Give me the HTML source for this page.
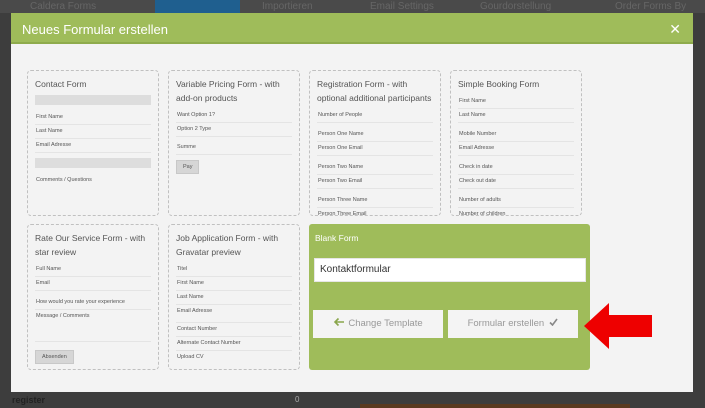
<!DOCTYPE html>
<html><head><meta charset="utf-8"><style>
*{box-sizing:border-box;margin:0;padding:0}
body{width:705px;height:408px;overflow:hidden;background:#3d3d3d;font-family:"Liberation Sans",sans-serif;position:relative}
.top{position:absolute;left:0;top:0;width:705px;height:13px;background:#4a4a4a;color:#666;font-size:10px}
.top span{position:absolute;top:1px}
.modal{position:absolute;left:11px;top:13px;width:682px;height:379px;background:#f3f3f3}
.hdr{height:31px;background:#9fbc5a;color:#fff;font-size:13px;padding:9px 0 0 11px;border-bottom:2px solid #8eab4c}
.x{position:absolute;right:12px;top:8px;color:#fff;font-size:14px}
.card{position:absolute;width:132px;height:146px;border:1.3px dashed #c0c0c0;border-radius:4px;overflow:hidden;padding:6px 7px}
.card h4{font-weight:normal;font-size:8.5px;color:#555;line-height:14px;margin-bottom:4px}
.f{font-size:5.5px;color:#555;border-bottom:1px solid #e4e4e4;padding:3px 1px 4px}
.g{height:10px;background:#ddd;margin:2px 0 6px}
.btn{display:inline-block;background:#d6d6d6;border:1px solid #c8c8c8;font-size:5.5px;color:#555;padding:3px 6px;margin-top:4px}
.blank{position:absolute;left:298px;top:211px;width:281px;height:146px;background:#9fbc5a;border-radius:3px}
.blank .t{color:#fff;font-size:8.5px;position:absolute;left:6px;top:9px}
.inp{position:absolute;left:5px;top:34px;width:272px;height:24px;background:#fff;border:1px solid #e6e6e6;font-size:10px;color:#333;padding:5px 0 0 5px}
.b{position:absolute;top:86px;height:28px;width:130px;background:#f4f4f4;color:#999;font-size:9.5px;text-align:center;line-height:28px}
</style></head><body>
<div class="top"><div style="position:absolute;left:155px;top:0;width:85px;height:13px;background:#1f5f8f"></div><span style="left:30px">Caldera Forms</span><span style="left:262px">Importieren</span><span style="left:370px">Email Settings</span><span style="left:480px">Gourdorstellung</span><span style="left:615px">Order Forms By Name</span></div>
<div style="position:absolute;left:12px;top:395px;font-size:9px;font-weight:bold;color:#222">register</div>
<div style="position:absolute;left:295px;top:395px;font-size:8px;color:#aaa">0</div>
<div style="position:absolute;left:360px;top:404px;width:270px;height:4px;background:#5a3a20"></div>
<div class="modal">
<div class="hdr">Neues Formular erstellen</div><div class="x">✕</div>

<div class="card" style="left:16px;top:57px"><h4>Contact Form</h4><div class="g"></div><div class="f">First Name</div><div class="f">Last Name</div><div class="f">Email Adresse</div><div class="g" style="margin-top:5px"></div><div class="f" style="border:0">Comments / Questions</div></div>
<div class="card" style="left:157px;top:57px"><h4>Variable Pricing Form - with add-on products</h4><div class="f">Want Option 1?</div><div class="f">Option 2 Type</div><div class="f" style="padding-top:7px">Summe</div><div class="btn">Pay</div></div>
<div class="card" style="left:298px;top:57px"><h4>Registration Form - with optional additional participants</h4><div class="f">Number of People</div><div class="f" style="padding-top:8px">Person One Name</div><div class="f">Person One Email</div><div class="f" style="padding-top:8px">Person Two Name</div><div class="f">Person Two Email</div><div class="f" style="padding-top:8px">Person Three Name</div><div class="f">Person Three Email</div></div>
<div class="card" style="left:439px;top:57px"><h4>Simple Booking Form</h4><div class="f">First Name</div><div class="f">Last Name</div><div class="f" style="padding-top:8px">Mobile Number</div><div class="f">Email Adresse</div><div class="f" style="padding-top:8px">Check in date</div><div class="f">Check out date</div><div class="f" style="padding-top:8px">Number of adults</div><div class="f">Number of children</div></div>

<div class="card" style="left:16px;top:211px"><h4>Rate Our Service Form - with star review</h4><div class="f">Full Name</div><div class="f">Email</div><div class="f" style="padding-top:8px">How would you rate your experience</div><div class="f" style="height:32px">Message / Comments</div><div class="btn" style="margin-top:8px">Absenden</div></div>
<div class="card" style="left:157px;top:211px"><h4>Job Application Form - with Gravatar preview</h4><div class="f">Titel</div><div class="f">First Name</div><div class="f">Last Name</div><div class="f" style="padding-bottom:8px">Email Adresse</div><div class="f">Contact Number</div><div class="f">Alternate Contact Number</div><div class="f" style="border:0">Upload CV</div></div>

<div class="blank"><div class="t">Blank Form</div><div class="inp">Kontaktformular</div>
<div class="b" style="left:4px"><svg width="12" height="10" style="vertical-align:-1px;margin-right:3px"><path d="M11 5H2M5.5 1.5L2 5l3.5 3.5" stroke="#8aa64c" stroke-width="1.6" fill="none"/></svg>Change Template</div>
<div class="b" style="left:139px">Formular erstellen &nbsp;<svg width="9" height="8" style="vertical-align:0"><path d="M1 4.5l2.5 2.5L8 1" stroke="#888" stroke-width="1.6" fill="none"/></svg></div></div>
</div>
<svg style="position:absolute;left:583px;top:302px" width="70" height="48"><polygon points="1,24 26,1 26,13 69,13 69,35 26,35 26,47" fill="#ee0000"/></svg>
</body></html>
